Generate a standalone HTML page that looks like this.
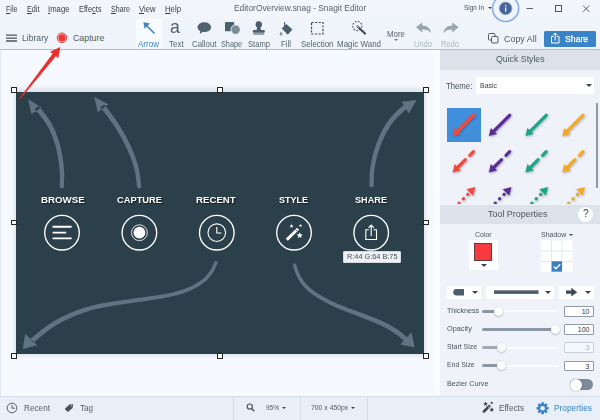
<!DOCTYPE html>
<html><head><meta charset="utf-8">
<style>
*{margin:0;padding:0;box-sizing:border-box}
html,body{width:600px;height:420px;overflow:hidden;background:#f3f7fc;font-family:"Liberation Sans",sans-serif;}
.a{position:absolute}
.t{position:absolute;white-space:nowrap;transform-origin:0 50%;color:#4d5a66;font-size:9px;line-height:10px}
.m{color:#3a3f45;font-size:9px;top:4px}
.tl{top:39px;font-size:9.2px;color:#55636f}
#menubar{left:0;top:0;width:600px;height:19px;background:#f2f6fb}
#toolbar{left:0;top:19px;width:600px;height:31px;background:#eef4fa}
#tbline{left:0;top:49px;width:600px;height:1px;background:#a5bfd6}
#canvas{left:0;top:50px;width:440px;height:346px;background:#f6f9fd}
#right{left:440px;top:50px;width:160px;height:346px;background:#eff3f9}
#bottom{left:0;top:396px;width:600px;height:24px;background:#e8eff8;border-top:1px solid #d5dfea}
.hdr{position:absolute;background:#dce2ea;left:440px;width:160px}
.hs{position:absolute;width:5.6px;height:5.6px;border:1px solid #222;background:#fff;border-radius:.5px}
.dd{position:absolute;background:#fff;border-radius:1px}
.car{position:absolute;width:0;height:0;border-left:3px solid transparent;border-right:3px solid transparent;border-top:3.2px solid #36424d}
.lbl{font-size:8.6px;color:#46525d;left:446px}
.trk{position:absolute;left:482px;width:77px;height:2px;background:#f9fbfd;border-radius:1px}
.fil{position:absolute;left:482px;height:3px;background:#8b97a3;border-radius:1.5px}
.knb{position:absolute;width:9px;height:9px;border-radius:50%;background:#fff;box-shadow:0 0.5px 1.5px rgba(60,70,90,.55)}
.inp{position:absolute;left:564px;width:29.5px;height:10.5px;background:#fff;border:1px solid #8f99a3;border-radius:1px;font-size:7px;line-height:9px;text-align:right;padding-right:3px;color:#333}
.sep{position:absolute;top:397px;width:1px;height:23px;background:#d3dde8}
.il{position:absolute;color:#fff;font-weight:bold;font-size:10px;line-height:10px;top:102.7px;transform-origin:0 50%;text-shadow:1px 1.2px 1.2px rgba(0,0,0,.6);white-space:nowrap}
</style></head><body>
<div class="a" id="menubar"></div>
<div class="a" id="toolbar"></div>
<div class="a" style="left:136px;top:19px;width:26px;height:30px;background:#f8fbfe"></div>
<div class="a" id="tbline"></div>
<div class="a" id="canvas"></div>
<div class="a" id="right"></div>
<div class="a" style="left:434.5px;top:50px;width:5.5px;height:346px;background:#fafcfe"></div>
<div class="a" style="left:0;top:50px;width:1px;height:346px;background:#e2eaf4"></div>
<div class="a" id="bottom"></div>

<!-- menu -->
<div class="t m" style="left:6.0px;top:4.0px;font-size:8.7px;line-height:10px;transform:scaleX(0.821);"><u>F</u>ile</div>
<div class="t m" style="left:27.0px;top:4.0px;font-size:8.7px;line-height:10px;transform:scaleX(0.834);"><u>E</u>dit</div>
<div class="t m" style="left:48.0px;top:4.0px;font-size:8.7px;line-height:10px;transform:scaleX(0.890);"><u>I</u>mage</div>
<div class="t m" style="left:79.0px;top:4.0px;font-size:8.7px;line-height:10px;transform:scaleX(0.852);">Effe<u>c</u>ts</div>
<div class="t m" style="left:111.0px;top:4.0px;font-size:8.7px;line-height:10px;transform:scaleX(0.819);"><u>S</u>hare</div>
<div class="t m" style="left:139.0px;top:4.0px;font-size:8.7px;line-height:10px;transform:scaleX(0.883);"><u>V</u>iew</div>
<div class="t m" style="left:165.0px;top:4.0px;font-size:8.7px;line-height:10px;transform:scaleX(0.895);"><u>H</u>elp</div>
<div class="t" style="left:233.5px;top:2.8px;font-size:9.1px;line-height:10px;transform:scaleX(0.921);color:#5a6168">EditorOverview.snag - Snagit Editor</div>
<div class="t" style="left:464.0px;top:2.8px;font-size:7.9px;line-height:10px;transform:scaleX(0.814);color:#4a525a">Sign In</div>
<div class="car" style="left:488px;top:7px;border-left-width:2px;border-right-width:2px;border-top-width:2.5px"></div>

<!-- window controls + info -->
<svg class="a" style="left:0;top:0" width="600" height="50" viewBox="0 0 600 50">
 <circle cx="505.6" cy="8.4" r="13.1" fill="#eff4fb" stroke="#86abec" stroke-width="1.6"/>
 <circle cx="505.6" cy="8.4" r="6.3" fill="#46639a" stroke="#93a7cb" stroke-width="1"/>
 <rect x="505" y="7.4" width="1.3" height="4.2" fill="#fff"/><rect x="505" y="4.9" width="1.3" height="1.4" fill="#fff"/>
 <path d="M526.5 8.5h6.5" stroke="#666" stroke-width="1"/>
 <rect x="555.5" y="5.5" width="6" height="6" fill="none" stroke="#555" stroke-width="1"/>
 <path d="M583 5.5l6.4 6.4M589.4 5.5l-6.4 6.4" stroke="#555" stroke-width=".9"/>
</svg>

<!-- left toolbar -->
<svg class="a" style="left:0;top:19px" width="130" height="31" viewBox="0 19 130 31">
 <path d="M6 35.2h11M6 38.1h11M6 41h11" stroke="#4a5660" stroke-width="1.3"/>
 <circle cx="62" cy="37.8" r="4.8" fill="#f6b3b0" stroke="#ea4a45" stroke-width="1"/>
 <circle cx="62" cy="37.8" r="3.5" fill="#ee3a36"/>
</svg>
<div class="t" style="left:22.3px;top:33.2px;font-size:8.8px;line-height:10px;transform:scaleX(0.978);color:#4f5b66">Library</div>
<div class="t" style="left:73.0px;top:33.2px;font-size:8.8px;line-height:10px;transform:scaleX(1.000);color:#4f5b66">Capture</div>

<!-- tools labels -->
<div class="t tl" style="left:138.0px;top:38.6px;font-size:8.4px;line-height:10px;transform:scaleX(0.960);color:#3d84c6">Arrow</div>
<div class="t tl" style="left:169.0px;top:38.6px;font-size:8.4px;line-height:10px;transform:scaleX(0.957);">Text</div>
<div class="t tl" style="left:191.5px;top:38.6px;font-size:8.4px;line-height:10px;transform:scaleX(0.939);">Callout</div>
<div class="t tl" style="left:221.0px;top:38.6px;font-size:8.4px;line-height:10px;transform:scaleX(0.867);">Shape</div>
<div class="t tl" style="left:248.0px;top:38.6px;font-size:8.4px;line-height:10px;transform:scaleX(0.908);">Stamp</div>
<div class="t tl" style="left:281.0px;top:38.6px;font-size:8.4px;line-height:10px;transform:scaleX(0.934);">Fill</div>
<div class="t tl" style="left:300.6px;top:38.6px;font-size:8.4px;line-height:10px;transform:scaleX(0.940);">Selection</div>
<div class="t tl" style="left:337.0px;top:38.6px;font-size:8.4px;line-height:10px;transform:scaleX(0.952);">Magic Wand</div>
<div class="t" style="left:387.0px;top:28.6px;font-size:8.4px;line-height:10px;transform:scaleX(0.943);color:#55636f">More</div>
<div class="car" style="left:393.5px;top:39px;border-left-width:2px;border-right-width:2px;border-top-width:2.5px;border-top-color:#6a7682"></div>
<div class="t tl" style="left:414.0px;top:38.6px;font-size:8.4px;line-height:10px;transform:scaleX(0.899);color:#adb5bd">Undo</div>
<div class="t tl" style="left:441.0px;top:38.6px;font-size:8.4px;line-height:10px;transform:scaleX(0.899);color:#adb5bd">Redo</div>
<div class="t" style="left:503.5px;top:33.6px;font-size:9.5px;line-height:10px;transform:scaleX(0.938);color:#4f5b66">Copy All</div>
<div class="a" style="left:543.5px;top:30.5px;width:52.5px;height:16px;background:#3b83c7;border-radius:1.5px"></div>
<div class="t" style="left:565.2px;top:33.6px;font-size:9.5px;line-height:10px;transform:scaleX(0.915);color:#fff;-webkit-text-stroke:.25px #fff">Share</div>

<!-- tool icons -->
<svg class="a" style="left:130px;top:19px" width="470" height="31" viewBox="130 19 470 31">
 <!-- arrow -->
 <path d="M154.5 33.5L146 25" stroke="#3d84c6" stroke-width="1.6" fill="none"/>
 <path d="M143.3 22.2l6.6 1.3-5.2 5.2z" fill="#3d84c6"/>
 <!-- callout -->
 <ellipse cx="204.3" cy="27.2" rx="6.8" ry="4.9" fill="#4f626f"/>
 <path d="M200.5 30l-.8 4 4.5-3z" fill="#4f626f"/>
 <!-- shape -->
 <rect x="225" y="22" width="9.2" height="9.2" rx="1" fill="#4b5e6b"/>
 <circle cx="235.6" cy="29.6" r="5.1" fill="#eef4fa"/>
 <circle cx="235.6" cy="29.6" r="4.3" fill="#7f8d98"/>
 <!-- stamp -->
 <circle cx="258.8" cy="24.5" r="3.2" fill="#4b5e6b"/>
 <path d="M257.3 26.5h3l.8 3.9h-4.6z" fill="#4b5e6b"/>
 <rect x="252.8" y="30.1" width="12" height="2.7" rx=".8" fill="#4b5e6b"/>
 <rect x="253.4" y="33.1" width="10.8" height="1.7" fill="#8795a0"/>
 <!-- fill -->
 <path d="M286.3 23.9L292.4 29.6 287.7 34.7 281.6 28.2z" fill="#4b5e6b"/>
 <path d="M282.6 27.6l3.3-3.3" stroke="#dfe6ee" stroke-width=".7"/>
 <path d="M284.6 22v5.6" stroke="#4b5e6b" stroke-width="1.1"/>
 <path d="M281 31.6c.9 1.2 1.3 1.9 1.3 2.6a1.3 1.3 0 0 1-2.6 0c0-.7.4-1.4 1.3-2.6z" fill="#8795a0"/>
 <!-- selection -->
 <rect x="311.5" y="22.5" width="11.5" height="11.5" fill="none" stroke="#3c4a55" stroke-width="1.2" stroke-dasharray="2.2 1.4"/>
 <!-- magic wand -->
 <circle cx="357.3" cy="26" r="4.6" fill="none" stroke="#4b5e6b" stroke-width="1.1" stroke-dasharray="1.8 1.3"/>
 <path d="M357.5 26.5l7.5 7" stroke="#3c4a55" stroke-width="2.2" stroke-linecap="round"/>
 <path d="M357 26l2 1.9" stroke="#eef4fa" stroke-width=".8"/>
 <!-- undo -->
 <path d="M416 27.3l6.2-4.8v3c5 .2 8.3 2.8 9 7.6-2.2-2.6-4.9-3.6-9-3.5v2.9z" fill="#9aa4ad"/>
 <!-- redo -->
 <path d="M458.5 27.3l-6.2-4.8v3c-5 .2-8.3 2.8-9 7.6 2.2-2.6 4.9-3.6 9-3.5v2.9z" fill="#9aa4ad"/>
 <!-- copy -->
 <rect x="488.5" y="33.5" width="6.5" height="6.5" rx="1" fill="none" stroke="#4f5b66" stroke-width="1"/>
 <rect x="491.5" y="36.5" width="6.5" height="6.5" rx="1" fill="#eef4fa" stroke="#4f5b66" stroke-width="1"/>
 <!-- share icon -->
 <path d="M553.5 36.5h-2v6.5h7.5v-6.5h-2" fill="none" stroke="#fff" stroke-width="1"/>
 <path d="M555.2 40.5v-7M553.2 35.2l2-2.2 2 2.2" fill="none" stroke="#fff" stroke-width="1"/>
</svg>
<div class="t" style="left:170.3px;top:17.4px;font-size:19px;line-height:19px;color:#52606c;transform:scaleX(.93)">a</div>

<!-- ===== canvas image ===== -->
<div class="a" style="left:14px;top:88px;width:412px;height:268px;background:#e0e6ee;filter:blur(1.4px)"></div>
<div class="a" id="img" style="left:16px;top:91.5px;width:408px;height:262px;background:#2c404b;overflow:hidden">
<svg class="a" style="left:0;top:0" width="408" height="262" viewBox="16 91.5 408 262">
 <path fill="#5f7482" d="M64.0 185.9 64.0 183.4 64.1 180.9 64.1 178.3 64.2 175.8 64.2 173.2 64.1 170.6 63.9 168.0 63.7 165.4 63.4 162.9 63.1 160.3 62.7 157.8 62.3 155.2 61.8 152.6 61.3 150.1 60.7 147.5 60.1 145.0 59.4 142.4 58.6 139.8 57.7 137.1 56.7 134.5 55.7 131.8 54.6 129.1 53.4 126.6 52.2 124.2 51.0 121.9 49.6 119.8 48.3 117.7 46.9 115.9 45.7 114.1 44.4 112.5 43.3 111.0 42.2 109.8 41.2 108.6 40.2 107.6 39.2 106.6 38.2 105.5 34.6 108.9 35.6 110.0 36.6 111.0 37.6 112.0 38.5 113.0 39.5 114.2 40.6 115.5 41.7 117.0 43.0 118.7 44.3 120.5 45.6 122.4 46.8 124.4 48.0 126.4 49.1 128.6 50.2 131.0 51.3 133.6 52.4 136.1 53.3 138.7 54.2 141.2 55.0 143.7 55.7 146.1 56.3 148.6 56.9 151.1 57.4 153.5 57.9 156.0 58.3 158.5 58.7 160.9 59.0 163.4 59.3 165.9 59.5 168.3 59.7 170.8 59.8 173.3 59.9 175.8 59.9 178.3 59.8 180.8 59.8 183.3 59.8 185.9 60.0 186.7 60.4 187.4 61.1 187.8 61.9 188.0 62.7 187.8 63.4 187.4 63.8 186.7zM28.1 98.8 41.6 107.0 31.4 113.6z M141.2 185.7 140.9 183.1 140.6 180.6 140.4 178.1 140.1 175.5 139.7 172.9 139.2 170.2 138.6 167.6 138.0 165.1 137.2 162.5 136.4 159.9 135.5 157.4 134.6 154.8 133.6 152.2 132.6 149.7 131.4 147.1 130.3 144.6 129.0 142.0 127.8 139.4 126.4 136.8 125.0 134.2 123.5 131.6 121.9 129.0 120.4 126.4 118.9 124.0 117.4 121.7 115.8 119.3 114.3 117.1 112.8 115.0 111.4 113.0 110.1 111.2 108.9 109.7 107.9 108.4 106.9 107.2 106.0 106.1 105.1 105.1 104.2 104.0 100.4 107.2 101.3 108.3 102.2 109.4 103.1 110.4 104.0 111.5 105.0 112.7 106.1 114.2 107.4 115.9 108.8 117.8 110.3 119.9 111.9 122.1 113.4 124.3 114.9 126.6 116.4 128.9 117.9 131.4 119.4 133.9 120.9 136.5 122.3 139.0 123.6 141.6 124.9 144.0 126.1 146.5 127.3 149.0 128.4 151.5 129.4 153.9 130.4 156.4 131.3 158.9 132.2 161.3 133.0 163.8 133.7 166.3 134.4 168.7 135.0 171.2 135.5 173.6 135.8 176.0 136.1 178.5 136.4 181.1 136.7 183.6 137.0 186.1 137.3 186.9 137.8 187.6 138.5 187.9 139.3 188.0 140.1 187.7 140.8 187.2 141.1 186.5zM94.2 96.3 108.4 103.7 97.8 111.7z M373.7 184.8 373.8 182.4 373.8 180.1 373.8 177.9 373.9 175.6 374.0 173.3 374.3 171.0 374.5 168.6 374.9 166.2 375.3 163.7 375.8 161.2 376.3 158.7 377.0 156.3 377.6 153.8 378.4 151.3 379.2 148.8 380.1 146.3 381.0 143.9 382.0 141.4 383.1 138.9 384.3 136.3 385.5 133.8 386.8 131.3 388.2 128.9 389.5 126.7 390.9 124.6 392.4 122.7 393.9 120.8 395.5 119.0 397.0 117.3 398.6 115.7 400.0 114.2 401.5 112.9 403.0 111.6 404.5 110.3 406.1 109.0 407.6 107.7 404.4 103.9 402.9 105.2 401.3 106.5 399.8 107.8 398.2 109.2 396.6 110.7 395.0 112.3 393.4 114.0 391.8 115.8 390.2 117.7 388.6 119.7 387.0 121.9 385.5 124.1 384.1 126.5 382.7 129.0 381.3 131.7 380.1 134.3 378.9 137.0 377.8 139.6 376.7 142.2 375.8 144.8 374.9 147.4 374.1 150.0 373.3 152.6 372.6 155.1 372.0 157.7 371.5 160.4 371.0 163.0 370.6 165.5 370.2 168.1 369.9 170.6 369.7 173.0 369.6 175.4 369.6 177.8 369.6 180.1 369.5 182.4 369.5 184.6 369.6 185.5 370.1 186.1 370.7 186.6 371.5 186.8 372.4 186.7 373.0 186.2 373.5 185.6zM416.5 99.6 401.7 101.2 408.9 113.0z M214.4 261.5 213.7 263.0 213.0 264.5 212.4 265.9 211.7 267.3 211.0 268.7 210.1 270.1 209.2 271.4 208.2 272.8 207.2 274.1 206.0 275.4 204.8 276.7 203.4 277.9 201.7 279.2 199.9 280.5 198.0 281.8 196.0 283.1 193.9 284.3 191.8 285.4 189.6 286.4 187.4 287.3 185.1 288.2 182.7 289.1 180.3 289.8 177.8 290.6 175.3 291.3 172.7 291.9 170.2 292.4 167.4 293.0 164.5 293.5 161.3 294.1 157.7 294.7 153.9 295.3 149.9 295.8 145.7 296.4 141.6 297.0 137.5 297.6 133.5 298.1 129.5 298.7 125.5 299.2 121.5 299.7 117.5 300.3 113.7 300.9 109.9 301.5 106.1 302.2 102.5 302.8 98.9 303.5 95.4 304.3 92.1 305.1 88.9 305.9 85.9 306.8 83.1 307.7 80.4 308.6 77.7 309.6 75.1 310.6 72.5 311.6 70.0 312.6 67.5 313.7 65.1 314.8 62.8 315.9 60.5 317.0 58.3 318.2 56.2 319.4 54.1 320.6 52.2 321.8 50.2 323.0 48.4 324.2 46.6 325.5 44.9 326.7 43.3 327.9 41.7 329.1 40.2 330.3 38.7 331.5 37.2 332.7 35.8 333.9 34.4 335.0 33.1 336.2 31.8 337.3 30.4 338.4 33.6 342.2 34.9 341.0 36.3 339.9 37.6 338.7 38.9 337.6 40.3 336.4 41.7 335.3 43.2 334.1 44.7 332.9 46.2 331.7 47.7 330.5 49.3 329.3 51.0 328.2 52.8 327.0 54.6 325.8 56.6 324.6 58.5 323.4 60.6 322.3 62.7 321.2 64.8 320.1 67.1 319.0 69.4 317.9 71.8 316.8 74.2 315.8 76.7 314.8 79.3 313.8 81.9 312.9 84.5 311.9 87.3 311.0 90.1 310.2 93.1 309.3 96.4 308.5 99.7 307.8 103.3 307.1 106.9 306.4 110.6 305.7 114.3 305.1 118.1 304.5 122.0 303.9 126.0 303.3 130.1 302.8 134.1 302.2 138.1 301.6 142.1 301.0 146.3 300.4 150.4 299.8 154.5 299.2 158.4 298.5 161.9 297.9 165.2 297.3 168.1 296.8 170.9 296.2 173.6 295.6 176.2 294.9 178.8 294.2 181.4 293.4 183.9 292.6 186.4 291.7 188.8 290.7 191.1 289.7 193.4 288.6 195.7 287.4 197.9 286.2 200.0 284.8 202.0 283.5 203.9 282.1 205.6 280.7 207.2 279.2 208.6 277.8 209.9 276.3 211.0 274.9 212.1 273.4 213.1 271.9 214.0 270.4 214.8 268.9 215.5 267.3 216.1 265.8 216.8 264.4 217.4 262.9 217.6 262.3 217.5 261.6 217.2 261.0 216.6 260.7 216.0 260.5 215.3 260.6 214.7 260.9zM22.8 348.4 25.2 333.2 37.3 344.8z M293.0 265.1 293.5 266.7 293.9 268.2 294.4 269.8 294.9 271.4 295.6 273.1 296.3 274.8 297.2 276.5 298.1 278.2 299.1 280.0 300.2 281.7 301.5 283.5 302.8 285.2 304.3 286.8 305.8 288.4 307.5 289.9 309.2 291.4 311.2 292.9 313.2 294.4 315.5 296.0 317.9 297.5 320.4 299.1 323.0 300.6 325.8 302.0 328.5 303.5 331.3 304.9 334.2 306.2 337.1 307.5 340.1 308.7 343.2 310.0 346.3 311.2 349.6 312.5 353.0 313.8 356.4 315.1 359.8 316.4 363.2 317.7 366.4 319.0 369.5 320.2 372.6 321.5 375.7 322.7 378.6 324.0 381.3 325.2 383.9 326.5 386.2 327.7 388.5 329.0 390.5 330.2 392.5 331.5 394.4 332.7 396.1 334.0 397.7 335.1 399.1 336.2 400.4 337.4 401.7 338.5 403.0 339.7 404.4 340.9 407.6 337.1 406.2 336.0 404.9 334.9 403.6 333.7 402.2 332.5 400.6 331.3 398.9 330.0 397.0 328.8 395.1 327.5 393.0 326.2 390.8 324.9 388.4 323.6 385.9 322.3 383.2 321.1 380.4 319.8 377.4 318.6 374.3 317.3 371.2 316.1 368.0 314.8 364.7 313.6 361.3 312.3 357.9 311.1 354.5 309.8 351.1 308.6 347.9 307.4 344.8 306.1 341.7 304.9 338.7 303.7 335.8 302.5 333.0 301.2 330.3 299.9 327.6 298.6 324.9 297.1 322.3 295.7 319.9 294.2 317.5 292.8 315.4 291.4 313.4 289.9 311.6 288.5 309.9 287.1 308.4 285.7 306.9 284.3 305.6 282.8 304.3 281.3 303.2 279.7 302.1 278.1 301.2 276.5 300.3 274.8 299.5 273.2 298.8 271.7 298.2 270.2 297.7 268.7 297.2 267.2 296.7 265.6 296.2 264.1 295.9 263.5 295.4 263.1 294.7 262.9 294.1 263.0 293.5 263.3 293.1 263.8 292.9 264.5zM414.7 347.1 411.6 331.8 400.3 344.0z"/>
 <!-- circles -->
 <g fill="none" stroke="#fff" stroke-width="1.35">
  <circle cx="62" cy="232.2" r="17.3"/>
  <circle cx="139.4" cy="232.2" r="17.3"/>
  <circle cx="216.8" cy="232.2" r="17.3"/>
  <circle cx="294" cy="232.2" r="17.3"/>
  <circle cx="371.2" cy="232.2" r="17.3"/>
 </g>
 <path d="M52.6 226.3h19M52.6 232.1h13.6M52.6 237.9h19" stroke="#fff" stroke-width="1.9"/>
 <circle cx="139.4" cy="232.2" r="5.9" fill="#fff"/>
 <circle cx="139.4" cy="232.2" r="7.9" fill="none" stroke="#fff" stroke-width=".85"/>
 <circle cx="216.8" cy="232.2" r="8.8" fill="none" stroke="#fff" stroke-width="1.1"/>
 <path d="M216.8 226.5v6h4.6" fill="none" stroke="#fff" stroke-width="1.1"/>
 <!-- wand -->
 <path d="M286.8 239.3l11.2-11" stroke="#fff" stroke-width="3" stroke-linecap="butt"/>
 <path d="M295.3 229l2 2" stroke="#2c404b" stroke-width=".8"/>
 <path d="M299.7 231.8l.9 2 2.1.2-1.6 1.4.5 2.1-1.9-1.1-1.9 1.1.5-2.1-1.6-1.4 2.1-.2z" fill="#fff"/>
 <path d="M291.5 223.6l.6 1.3 1.4.1-1.1.9.4 1.4-1.3-.8-1.3.8.4-1.4-1.1-.9 1.4-.1z" fill="#fff"/>
 <path d="M300.5 223.3l.5 1.1 1.2.1-.9.8.3 1.2-1.1-.7-1.1.7.3-1.2-.9-.8 1.2-.1z" fill="#fff"/>
 <!-- share -->
 <path d="M368.8 229.3h-3v9.7h10.7v-9.7h-3" fill="none" stroke="#fff" stroke-width="1.1"/>
 <path d="M371.2 235.5v-10.5M368.5 227.3l2.7-2.8 2.7 2.8" fill="none" stroke="#fff" stroke-width="1.1"/>
</svg>
<div class="il" style="left:25.0px;top:103.5px;font-size:9.8px;line-height:10px;transform:scaleX(0.993);">BROWSE</div>
<div class="il" style="left:100.8px;top:103.5px;font-size:9.8px;line-height:10px;transform:scaleX(0.950);">CAPTURE</div>
<div class="il" style="left:180.3px;top:103.5px;font-size:9.8px;line-height:10px;transform:scaleX(0.986);">RECENT</div>
<div class="il" style="left:263.2px;top:103.5px;font-size:9.8px;line-height:10px;transform:scaleX(0.922);">STYLE</div>
<div class="il" style="left:339.0px;top:103.5px;font-size:9.8px;line-height:10px;transform:scaleX(0.933);">SHARE</div>
</div>
<div class="a" style="left:342.5px;top:250.5px;width:58px;height:12px;background:#eef1f5;border:1px solid #d5dae0;border-radius:1px"></div>
<div class="t" style="left:346.5px;top:251.7px;font-size:7.3px;line-height:10px;transform:scaleX(1.004);color:#474e56">R:44 G:64 B:75</div>

<!-- handles -->
<div class="hs" style="left:11px;top:87px"></div>
<div class="hs" style="left:217px;top:87px"></div>
<div class="hs" style="left:423px;top:87px"></div>
<div class="hs" style="left:11px;top:219.5px"></div>
<div class="hs" style="left:423px;top:219.5px"></div>
<div class="hs" style="left:11px;top:353px"></div>
<div class="hs" style="left:217px;top:353px"></div>
<div class="hs" style="left:423px;top:353px"></div>

<!-- red annotation arrow -->
<svg class="a" style="left:0;top:40px" width="100" height="70" viewBox="0 40 100 70">
 <path d="M60.3 47L50.2 51.8 52.6 53.7 19.3 98.6 20.1 99.2 55.9 56.3 58.2 58.2z" fill="#ee2e2a"/>
</svg>

<!-- ===== right panel ===== -->
<div class="hdr" style="top:50px;height:19.5px"></div>
<div class="t" style="left:496.0px;top:54.2px;font-size:9px;line-height:10px;transform:scaleX(0.972);color:#4a5763">Quick Styles</div>
<div class="t" style="left:446.0px;top:80.7px;font-size:8.7px;line-height:10px;transform:scaleX(0.893);color:#46525d">Theme:</div>
<div class="dd" style="left:476px;top:77px;width:118px;height:16.5px"></div>
<div class="t" style="left:480.0px;top:80.5px;font-size:7.7px;line-height:10px;transform:scaleX(0.904);color:#444">Basic</div>
<div class="car" style="left:585.5px;top:83.8px"></div>
<div class="a" style="left:447px;top:108px;width:34px;height:34px;background:#3f8fdd"></div>
<div class="a" style="left:596px;top:103px;width:2px;height:85px;background:#8d98a8"></div>
<svg class="a" style="left:440px;top:100px" width="160" height="104" viewBox="440 100 160 104">
 <defs>
  <filter id="sh" x="-30%" y="-30%" width="160%" height="160%"><feDropShadow dx="0.6" dy="1" stdDeviation="0.9" flood-color="#203050" flood-opacity=".4"/></filter>
  <g id="ar1"><path d="M20.8 0L5 15.8" stroke-width="3.3" stroke-linecap="round" fill="none"/><path d="M0 20.8l2-8.2 6.2 6.2z" stroke="none"/></g>
  <g id="ar2"><path d="M20.8 0L17.2 3.6M12.8 8L5 15.8" stroke-width="3.2" stroke-linecap="round" fill="none"/><path d="M0 20.8l2-8.4 6.4 6.4z" stroke="none"/></g>
  <g id="ar3"><path d="M-7.4 7.4h0M-11.8 11.8h0M-16.2 16.2h0M-20.6 20.6h0" stroke-width="3.4" stroke-linecap="round" fill="none"/><path d="M0 0l-2.2 8.8-6.6-6.6z" stroke="none"/></g>
 </defs>
 <g filter="url(#sh)">
  <use href="#ar1" x="452.6" y="115.3" fill="#f0483d" stroke="#f0483d"/>
  <use href="#ar1" x="488.8" y="115.3" fill="#5c2d91" stroke="#5c2d91"/>
  <use href="#ar1" x="525.4" y="115.3" fill="#1fa588" stroke="#1fa588"/>
  <use href="#ar1" x="562.2" y="115.3" fill="#f3aa23" stroke="#f3aa23"/>
  <use href="#ar2" x="452.6" y="151.7" fill="#f0483d" stroke="#f0483d"/>
  <use href="#ar2" x="488.8" y="151.7" fill="#5c2d91" stroke="#5c2d91"/>
  <use href="#ar2" x="525.4" y="151.7" fill="#1fa588" stroke="#1fa588"/>
  <use href="#ar2" x="562.2" y="151.7" fill="#f3aa23" stroke="#f3aa23"/>
  <use href="#ar3" x="475.3" y="187" fill="#f0483d" stroke="#f0483d"/>
  <use href="#ar3" x="511.5" y="187" fill="#5c2d91" stroke="#5c2d91"/>
  <use href="#ar3" x="548.1" y="187" fill="#1fa588" stroke="#1fa588"/>
  <use href="#ar3" x="584.9" y="187" fill="#f3aa23" stroke="#f3aa23"/>
 </g>
</svg>
<div class="hdr" style="top:204.5px;height:19.5px"></div>
<div class="t" style="left:487.5px;top:208.9px;font-size:9px;line-height:10px;transform:scaleX(0.991);color:#4a5763">Tool Properties</div>
<div class="a" style="left:578.4px;top:206.5px;width:15px;height:15px;border-radius:50%;background:#fff"></div>
<div class="t" style="left:578.4px;width:15px;text-align:center;top:209px;font-size:10px;color:#444">?</div>
<div class="t" style="left:475.3px;top:229.5px;font-size:8px;line-height:10px;transform:scaleX(0.873);color:#46525d">Color</div>
<div class="t" style="left:540.7px;top:229.5px;font-size:8px;line-height:10px;transform:scaleX(0.875);color:#46525d">Shadow</div>
<div class="car" style="left:568.5px;top:234px;border-left-width:2px;border-right-width:2px;border-top-width:2.5px"></div>
<div class="dd" style="left:469px;top:240px;width:28.5px;height:29.5px"></div>
<div class="a" style="left:474px;top:243px;width:18px;height:18px;background:#f63b3e;border:1px solid #6a3a3c"></div>
<div class="car" style="left:480.5px;top:264px"></div>
<svg class="a" style="left:540px;top:240px" width="34" height="33" viewBox="540 240 34 33">
 <rect x="540.8" y="240.5" width="31.7" height="31.5" fill="#fff"/>
 <path d="M551.4 240.5v31.5M562 240.5v31.5M540.8 251v0h31.7M540.8 261.5h31.7" stroke="#e3e8ee" stroke-width="1" fill="none"/>
 <rect x="551.6" y="261.3" width="10.4" height="10.4" fill="#3a7fc5"/>
 <path d="M553.8 266.5l2.2 2.3 4.2-4.6" stroke="#fff" stroke-width="1.3" fill="none"/>
</svg>
<div class="dd" style="left:446.5px;top:285.5px;width:34.5px;height:13.5px"></div>
<div class="dd" style="left:486px;top:285.5px;width:68px;height:13.5px"></div>
<div class="dd" style="left:559px;top:285.5px;width:34.5px;height:13.5px"></div>
<div class="car" style="left:471.5px;top:291px"></div>
<div class="car" style="left:544.5px;top:291px"></div>
<div class="car" style="left:584.5px;top:291px"></div>
<svg class="a" style="left:446px;top:285px" width="148" height="15" viewBox="446 285 148 15">
 <path d="M456.5 289h7.5v6.4h-7.5a3.2 3.2 0 0 1 0-6.4z" fill="#4b5e6b"/>
 <rect x="494" y="290.3" width="44.5" height="3.6" fill="#4b5e6b"/>
 <path d="M566 290.6h5.3v-2.8l5.9 4.4-5.9 4.4v-2.8h-5.3z" fill="#3c4a55"/>
</svg>

<div class="t lbl" style="left:446.6px;top:305.6px;font-size:8px;line-height:10px;transform:scaleX(0.889);">Thickness</div>
<div class="t lbl" style="left:446.6px;top:323.6px;font-size:8px;line-height:10px;transform:scaleX(0.914);">Opacity</div>
<div class="t lbl" style="left:446.6px;top:341.7px;font-size:8px;line-height:10px;transform:scaleX(0.865);">Start Size</div>
<div class="t lbl" style="left:446.6px;top:360.2px;font-size:8px;line-height:10px;transform:scaleX(0.865);">End Size</div>
<div class="t lbl" style="left:446.6px;top:378.5px;font-size:8px;line-height:10px;transform:scaleX(0.895);">Bezier Curve</div>
<div class="trk" style="top:310.3px"></div><div class="fil" style="top:309.8px;width:16px"></div><div class="knb" style="left:494px;top:306.8px"></div>
<div class="trk" style="top:328.5px"></div><div class="fil" style="top:328px;width:72px"></div><div class="knb" style="left:550.5px;top:325px"></div>
<div class="trk" style="top:346.7px"></div><div class="fil" style="top:346.2px;width:18px;opacity:.8"></div><div class="knb" style="left:497px;top:343.2px;opacity:.85"></div>
<div class="trk" style="top:364.9px"></div><div class="fil" style="top:364.4px;width:18px"></div><div class="knb" style="left:497px;top:361.4px"></div>
<div class="inp" style="top:306px">10</div>
<div class="inp" style="top:324.2px">100</div>
<div class="inp" style="top:342.4px;color:#aab2ba;border-color:#c8d0d8;background:#f4f7fb">3</div>
<div class="inp" style="top:360.6px">3</div>
<div class="a" style="left:569.5px;top:379px;width:23.5px;height:11px;border-radius:5.5px;background:#7d8a97"></div>
<div class="a" style="left:569.5px;top:378.5px;width:12px;height:12px;border-radius:50%;background:#fff;box-shadow:0 0 1.5px rgba(50,60,80,.6)"></div>

<!-- ===== bottom bar ===== -->
<div class="sep" style="left:233px"></div><div class="sep" style="left:300px"></div><div class="sep" style="left:367px"></div>
<svg class="a" style="left:0;top:397px" width="600" height="23" viewBox="0 397 600 23">
 <circle cx="12" cy="408" r="4.8" fill="none" stroke="#55626e" stroke-width="1"/>
 <path d="M12 405v3.2h3" fill="none" stroke="#55626e" stroke-width="1"/>
 <path d="M73.1 404.2L72.6 408 67.8 412 64.7 409 69.4 404.5z" fill="#44525e"/><circle cx="71.3" cy="405.8" r=".6" fill="#e8eff8"/>
 <circle cx="249.8" cy="406.6" r="2.6" fill="none" stroke="#4b5965" stroke-width="1.2"/>
 <path d="M251.8 408.7l2.5 2.5" stroke="#4b5965" stroke-width="1.5"/>
 <!-- effects wand -->
 <path d="M483.2 412.2l6.8-6.8" stroke="#3c4a55" stroke-width="2.7" stroke-linecap="butt"/>
 <path d="M487.7 406l1.9 1.9" stroke="#e8eff8" stroke-width=".7"/>
 <path d="M485.6 401.5l.7 1.5 1.6.2-1.2 1.1.3 1.6-1.4-.8-1.4.8.3-1.6-1.2-1.1 1.6-.2z M491.8 407.3l.7 1.5 1.6.2-1.2 1.1.3 1.6-1.4-.8-1.4.8.3-1.6-1.2-1.1 1.6-.2z M491.7 401.2l.5 1 1.1.1-.8.8.2 1.1-1-.5-1 .5.2-1.1-.8-.8 1.1-.1z" fill="#3c4a55"/>
 <!-- gear -->
 <g transform="translate(542.6 408.2)" fill="#3b83c7">
  <circle r="4.4"/>
  <g id="tt"><rect x="-1.3" y="-6" width="2.6" height="12" rx=".5"/></g>
  <use href="#tt" transform="rotate(45)"/><use href="#tt" transform="rotate(90)"/><use href="#tt" transform="rotate(135)"/>
  <circle r="2.3" fill="#e8eff8"/>
 </g>
</svg>
<div class="t" style="left:24.0px;top:403.1px;font-size:8.5px;line-height:10px;transform:scaleX(0.965);color:#55626e">Recent</div>
<div class="t" style="left:80.0px;top:403.1px;font-size:8.5px;line-height:10px;transform:scaleX(0.948);color:#55626e">Tag</div>
<div class="t" style="left:266.0px;top:402.7px;font-size:7.4px;line-height:10px;transform:scaleX(0.879);color:#4b5965">95%</div>
<div class="car" style="left:282px;top:407px;border-left-width:2px;border-right-width:2px;border-top-width:2.5px"></div>
<div class="t" style="left:310.7px;top:402.7px;font-size:7.4px;line-height:10px;transform:scaleX(0.926);color:#4b5965">700 x 450px</div>
<div class="car" style="left:351px;top:407px;border-left-width:2px;border-right-width:2px;border-top-width:2.5px"></div>
<div class="t" style="left:499.0px;top:403.2px;font-size:8.8px;line-height:10px;transform:scaleX(0.935);color:#4b5965">Effects</div>
<div class="t" style="left:554.0px;top:403.2px;font-size:8.8px;line-height:10px;transform:scaleX(0.948);color:#3b83c7">Properties</div>
</body></html>
